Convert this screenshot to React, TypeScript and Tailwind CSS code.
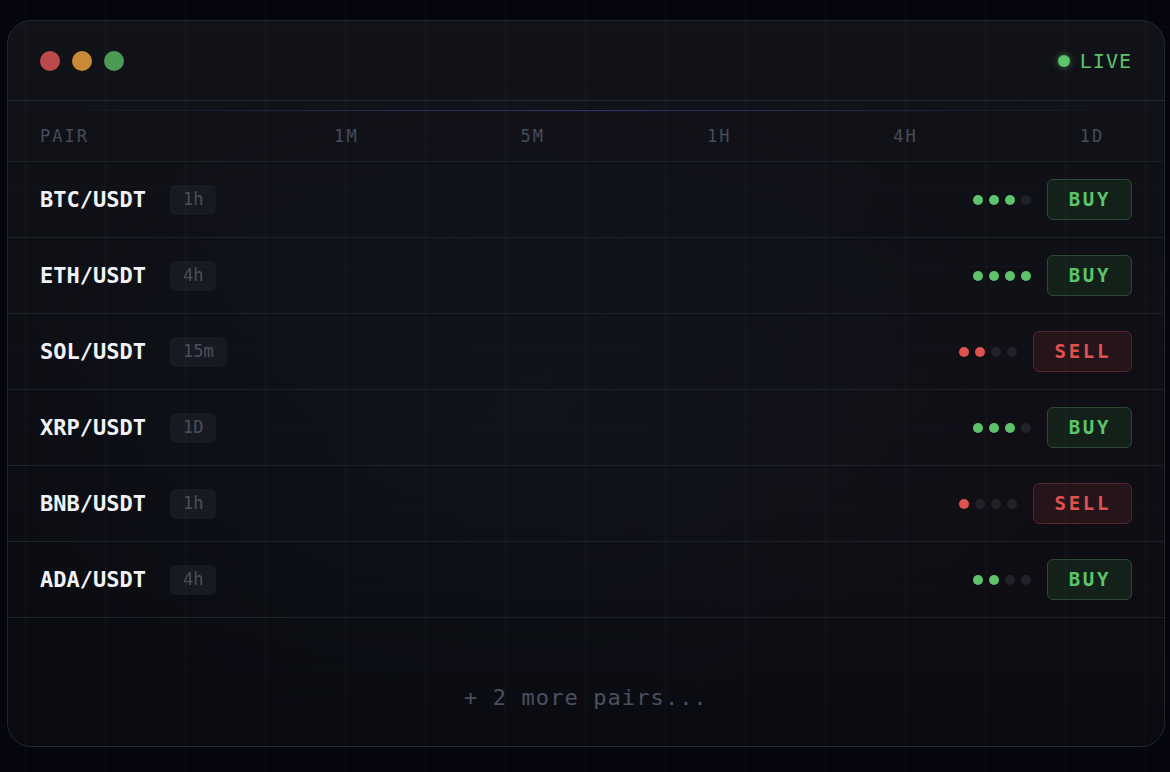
import React from "react";

type Signal = "BUY" | "SELL";

interface Pair {
  name: string;
  tf: string;
  strength: number;
  signal: Signal;
}

const PAIRS: Pair[] = [
  { name: "BTC/USDT", tf: "1h", strength: 3, signal: "BUY" },
  { name: "ETH/USDT", tf: "4h", strength: 4, signal: "BUY" },
  { name: "SOL/USDT", tf: "15m", strength: 2, signal: "SELL" },
  { name: "XRP/USDT", tf: "1D", strength: 3, signal: "BUY" },
  { name: "BNB/USDT", tf: "1h", strength: 1, signal: "SELL" },
  { name: "ADA/USDT", tf: "4h", strength: 2, signal: "BUY" },
];

const TIMEFRAMES = ["1M", "5M", "1H", "4H", "1D"];

function StrengthDots({ value, signal }: { value: number; signal: Signal }) {
  return (
    <div className="flex items-center gap-1.5">
      {[0, 1, 2, 3].map((i) => {
        const on = i < value;
        const cls = on
          ? signal === "BUY"
            ? "bg-[#5ec46b]"
            : "bg-[#e0524f]"
          : "bg-[#20222a]";
        return <span key={i} className={`block h-2.5 w-2.5 rounded-full ${cls}`} />;
      })}
    </div>
  );
}

function SignalBadge({ signal }: { signal: Signal }) {
  const cls =
    signal === "BUY"
      ? "bg-[#13211a] border-[#2a4b33] text-[#5cc46b]"
      : "bg-[#25141a] border-[#55262d] text-[#e0524f]";
  return (
    <div
      className={`flex h-[41px] items-center rounded-md border pl-[21px] pr-[20px] text-[19px] font-bold tracking-[0.14em] ${cls}`}
    >
      {signal}
    </div>
  );
}

function Row({ pair }: { pair: Pair }) {
  return (
    <div className="flex h-[76px] items-center justify-between border-b border-[#1e2028] px-8">
      <div className="flex items-center gap-6">
        <span className="text-[22px] font-bold leading-none text-[#f1f2f6]">{pair.name}</span>
        <span className="flex h-[30px] items-center rounded-md bg-[#181a21] px-[13px] text-[17px] leading-none text-[#4a4f5d]">
          {pair.tf}
        </span>
      </div>
      <div className="flex items-center gap-4">
        <StrengthDots value={pair.strength} signal={pair.signal} />
        <SignalBadge signal={pair.signal} />
      </div>
    </div>
  );
}

export default function App() {
  return (
    <div
      className="relative min-h-screen w-full overflow-hidden bg-[#05060d] pt-[20px]"
      style={{ fontFamily: '"DejaVu Sans Mono", "Liberation Mono", monospace' }}
    >
      <div className="relative mx-[7px] flex h-[727px] w-[1158px] flex-col overflow-hidden rounded-[24px] border border-[#23252f] bg-gradient-to-b from-[#121319] via-[#0d0e14] to-[#0a0b10]">
        {/* soft glow behind the table */}
        <div className="pointer-events-none absolute inset-0 bg-[radial-gradient(ellipse_at_45%_55%,rgba(40,60,90,0.12),transparent_60%)]" />
        <div className="pointer-events-none absolute inset-0 bg-[radial-gradient(ellipse_at_85%_65%,rgba(90,30,40,0.06),transparent_40%)]" />

        {/* title bar */}
        <div className="relative flex h-[80px] shrink-0 items-center justify-between border-b border-[#262832] px-8">
          <div className="flex items-center gap-3">
            <span className="block h-5 w-5 rounded-full bg-[#bd4a4a]" />
            <span className="block h-5 w-5 rounded-full bg-[#c88a36]" />
            <span className="block h-5 w-5 rounded-full bg-[#4c9b55]" />
          </div>
          <div className="flex items-center gap-2.5">
            <span className="block h-3 w-3 rounded-full bg-[#5cc46b] shadow-[0_0_6px_rgba(92,196,107,0.6)]" />
            <span className="text-[20px] leading-none tracking-[0.05em] text-[#5cc46b]">LIVE</span>
          </div>
        </div>

        {/* scan line */}
        <div className="relative pt-[9px]">
          <div className="h-px w-full bg-gradient-to-r from-transparent via-[#4b4fa8]/60 to-transparent" />
        </div>

        {/* column headers */}
        <div className="relative grid h-[51px] shrink-0 grid-cols-[160px_repeat(5,80px)] content-center items-center justify-between border-b border-[#1e2028] px-8 text-[17px] leading-none tracking-[0.12em] text-[#474c5a]">
          <span>PAIR</span>
          {TIMEFRAMES.map((t) => (
            <span key={t} className="text-center">
              {t}
            </span>
          ))}
        </div>

        {/* rows */}
        <div className="relative">
          {PAIRS.map((p) => (
            <Row key={p.name} pair={p} />
          ))}
        </div>

        {/* footer */}
        <div className="relative flex flex-1 justify-center pt-[66px]">
          <span className="text-[22px] leading-[28px] tracking-[0.05em] text-[#4b5060]">
            + 2 more pairs...
          </span>
        </div>
      </div>

      {/* background grid, drawn over everything */}
      <div className="pointer-events-none absolute inset-0 bg-[linear-gradient(to_right,rgba(140,150,220,0.05)_1px,transparent_1px),linear-gradient(to_bottom,rgba(140,150,220,0.02)_1px,transparent_1px)] bg-[size:80px_80px] bg-[position:25px_26px]" />
    </div>
  );
}
